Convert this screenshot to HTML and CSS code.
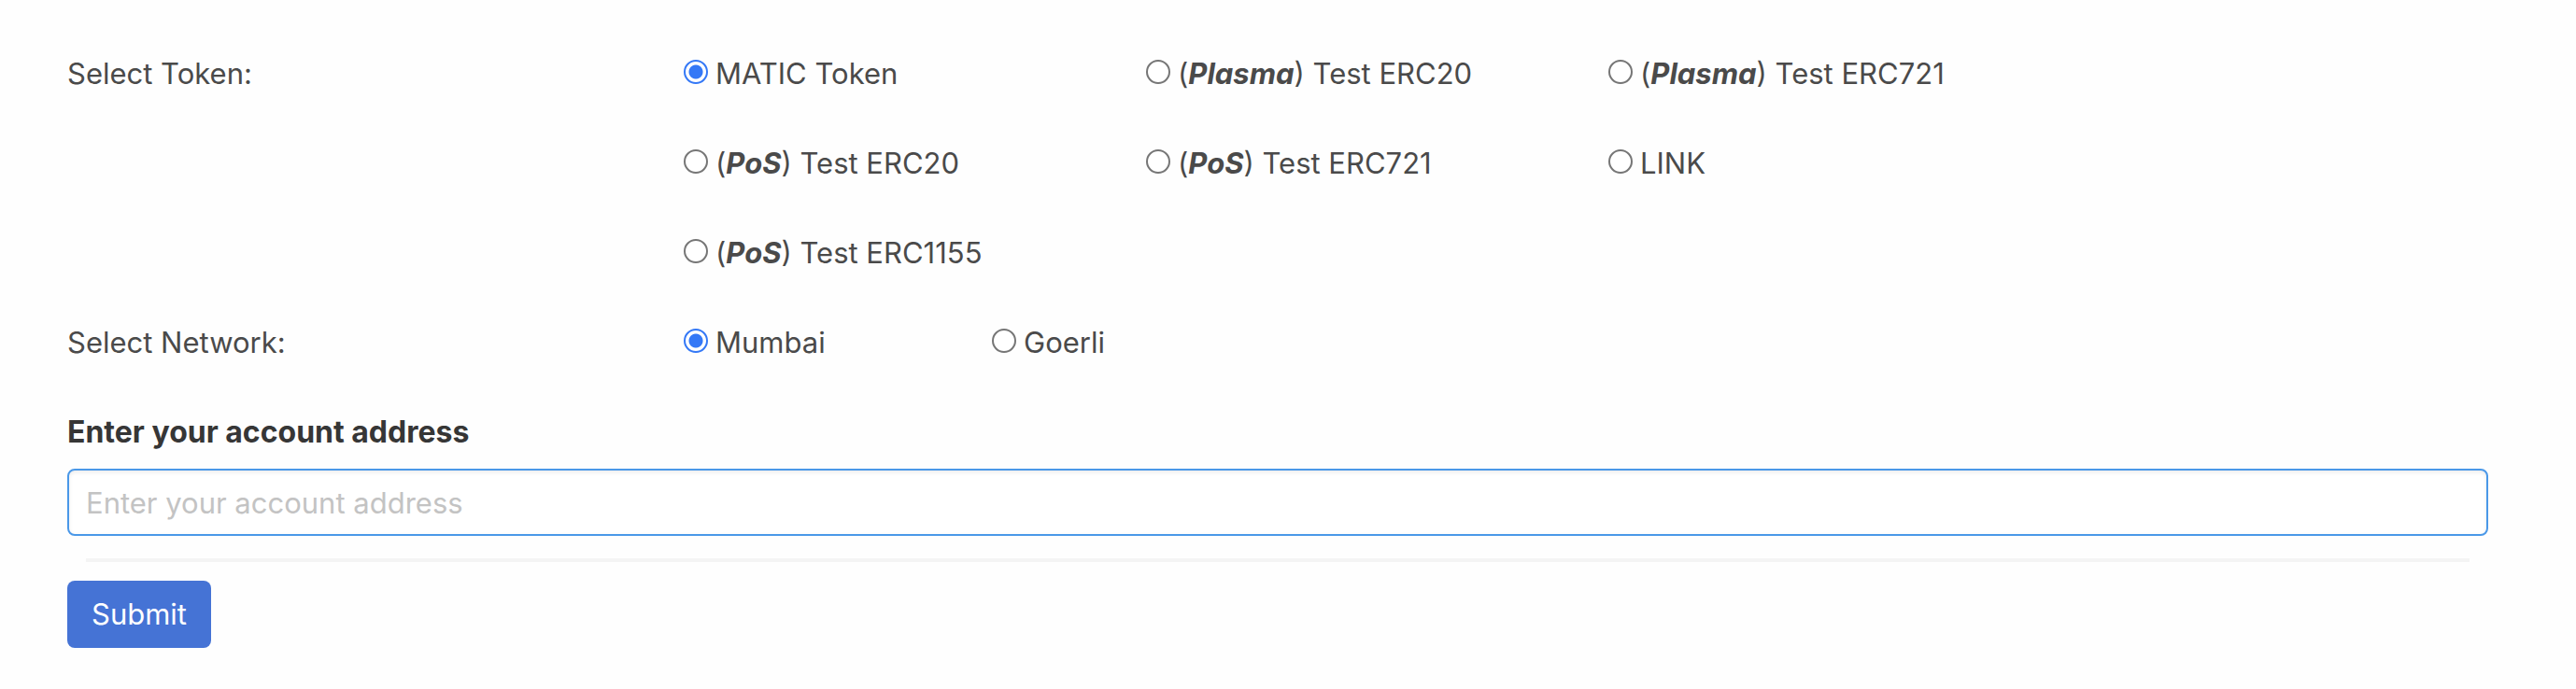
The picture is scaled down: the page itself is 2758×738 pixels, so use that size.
FILE: index.html
```html
<!DOCTYPE html>
<html lang="en">
<head>
  <meta charset="utf-8">
  <meta name="viewport" content="width=device-width, initial-scale=1">
  <title>Faucet</title>
  <link rel="stylesheet" href="styles.css">
</head>
<body>
  <form class="faucet">
    <div class="row" role="radiogroup" aria-labelledby="token-title">
      <span class="row-title" id="token-title">Select Token:</span>
      <div class="options options-token">
        <label class="option"><input class="radio" type="radio" name="token" checked><span>MATIC Token</span></label>
        <label class="option"><input class="radio" type="radio" name="token"><span>(<strong class="kind">Plasma</strong>) Test ERC20</span></label>
        <label class="option"><input class="radio" type="radio" name="token"><span>(<strong class="kind">Plasma</strong>) Test ERC721</span></label>
        <label class="option"><input class="radio" type="radio" name="token"><span>(<strong class="kind">PoS</strong>) Test ERC20</span></label>
        <label class="option"><input class="radio" type="radio" name="token"><span>(<strong class="kind">PoS</strong>) Test ERC721</span></label>
        <label class="option"><input class="radio" type="radio" name="token"><span>LINK</span></label>
        <label class="option"><input class="radio" type="radio" name="token"><span>(<strong class="kind">PoS</strong>) Test ERC1155</span></label>
      </div>
    </div>
    <div class="row" role="radiogroup" aria-labelledby="network-title">
      <span class="row-title" id="network-title">Select Network:</span>
      <div class="options options-network">
        <label class="option"><input class="radio" type="radio" name="network" checked><span>Mumbai</span></label>
        <label class="option"><input class="radio" type="radio" name="network"><span>Goerli</span></label>
      </div>
    </div>
    <label class="field-label" for="account">Enter your account address</label>
    <input class="field-input" id="account" type="text" placeholder="Enter your account address">
    <hr class="divider">
    <button class="submit" type="submit">Submit</button>
  </form>
</body>
</html>
```

FILE: styles.css
```css
* {
  box-sizing: border-box;
}

body {
  margin: 0;
  background: #fefefe;
  color: #4a4a4a;
  font: 400 31px/48px Inter, "Liberation Sans", sans-serif;
}

.faucet {
  padding: 55px 94px 44px 72px;
}

.row {
  display: grid;
  grid-template-columns: 1fr 3fr;
  margin-right: -48px;
  margin-bottom: 48px;
}

.options {
  display: grid;
  row-gap: 48px;
}

.options-token {
  grid-template-columns: repeat(4, 1fr);
}

.options-token .option:nth-child(3n + 1) {
  grid-column: 1;
}

.options-network {
  grid-template-columns: repeat(6, 1fr);
}

.option {
  display: flex;
  align-items: baseline;
  gap: 8px;
  white-space: nowrap;
}

.radio {
  appearance: none;
  flex: none;
  width: 26px;
  height: 26px;
  margin: 0;
  border: 2px solid #767676;
  border-radius: 50%;
  background: #fff;
}

.radio:checked {
  border-color: #3478f6;
  background: radial-gradient(circle, #3478f6 7px, #fff 8px);
}

.kind {
  font-weight: 700;
  font-style: italic;
}

.field-label {
  display: block;
  margin-bottom: 15px;
  color: #363636;
  font-size: 32px;
  font-weight: 700;
}

.field-input {
  display: block;
  width: 100%;
  height: 72px;
  padding: 0 18px;
  border: 2px solid #4a98e8;
  border-radius: 8px;
  outline: none;
  background: #fff;
  box-shadow: inset 0 2px 4px rgba(10, 10, 10, 0.08);
  color: #363636;
  font: inherit;
}

.field-input::placeholder {
  color: #c3c3c3;
  opacity: 1;
}

.divider {
  height: 4px;
  margin: 24px 20px 20px;
  border: 0;
  background: #f4f4f4;
}

.submit {
  display: block;
  height: 72px;
  padding: 0 26px;
  border: 0;
  border-radius: 8px;
  background: #4573d5;
  color: #fff;
  font: inherit;
}
```
